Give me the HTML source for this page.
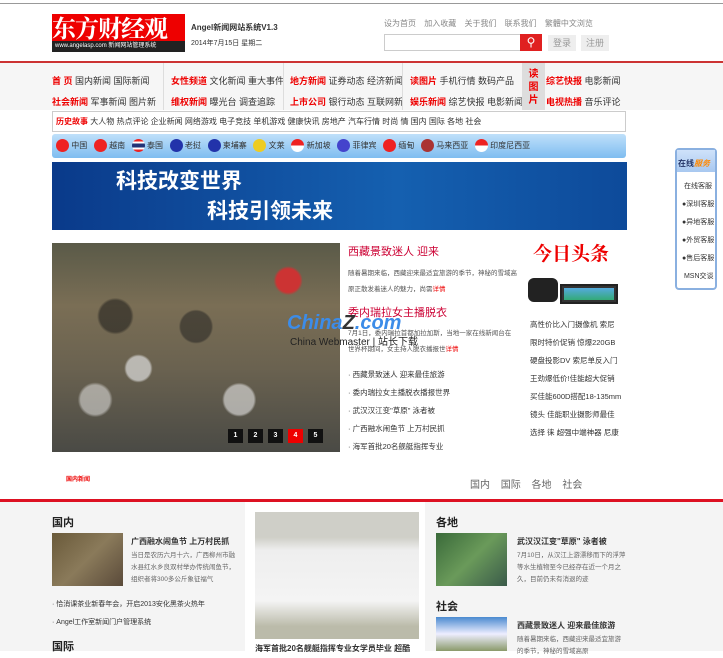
<!DOCTYPE html>
<html><head><meta charset="utf-8"><style>
*{margin:0;padding:0;box-sizing:border-box}
body{width:723px;height:651px;overflow:hidden;background:#fff;font-family:"Liberation Sans","Noto Sans CJK SC",sans-serif;font-size:9px;color:#333;position:relative}
.a{position:absolute}
.r{color:#e00;font-weight:bold}
</style></head><body>
<div class="a" style="left:0;top:3px;width:723px;height:1px;background:#999"></div>
<div class="a" style="left:52px;top:14px;width:133px;height:38px;background:#e00"></div>
<div class="a" style="left:52px;top:12px;width:133px;font:bold 24px/30px 'Noto Serif CJK SC',serif;color:#fff;letter-spacing:-1px">东方财经观察</div>
<div class="a" style="left:52px;top:41px;width:133px;height:11px;background:#222;color:#fff;font-size:6px;line-height:11px;padding-left:3px">www.angelasp.com 新闻网站管理系统</div>
<div class="a" style="left:191px;top:22px;font-size:8px;font-weight:bold">Angel新闻网站系统V1.3</div>
<div class="a" style="left:191px;top:38px;font-size:7px">2014年7月15日 星期二</div>
<div class="a" style="left:384px;top:18px;font-size:8px;color:#888;word-spacing:6px">设为首页 加入收藏 关于我们 联系我们 繁體中文浏览</div>
<div class="a" style="left:384px;top:34px;width:136px;height:17px;border:1px solid #ccc;border-right:none"></div>
<div class="a" style="left:520px;top:34px;width:22px;height:17px;background:#e02020;color:#fff;text-align:center;font-size:12px;line-height:16px">⚲</div>
<div class="a" style="left:548px;top:35px;width:28px;height:16px;background:#eee;color:#999;text-align:center;line-height:16px">登录</div>
<div class="a" style="left:581px;top:35px;width:28px;height:16px;background:#eee;color:#999;text-align:center;line-height:16px">注册</div>
<div class="a" style="left:0;top:61px;width:723px;height:2px;background:#c33"></div>
<div class="a" style="left:0;top:63px;width:723px;height:47px;background:#f6f6f6"></div>
<div class="a" style="left:52px;top:71px;line-height:21px;width:110px"><span class="r">首 页</span> 国内新闻 国际新闻<br><span class="r">社会新闻</span> 军事新闻 图片新闻</div>
<div class="a" style="left:163px;top:63px;width:1px;height:47px;background:#ddd"></div>
<div class="a" style="left:171px;top:71px;line-height:21px"><span class="r">女性频道</span> 文化新闻 重大事件<br><span class="r">维权新闻</span> 曝光台 调查追踪</div>
<div class="a" style="left:283px;top:63px;width:1px;height:47px;background:#ddd"></div>
<div class="a" style="left:290px;top:71px;line-height:21px"><span class="r">地方新闻</span> 证券动态 经济新闻<br><span class="r">上市公司</span> 银行动态 互联网新</div>
<div class="a" style="left:402px;top:63px;width:1px;height:47px;background:#ddd"></div>
<div class="a" style="left:410px;top:71px;line-height:21px"><span class="r">读图片</span> 手机行情 数码产品<br><span class="r">娱乐新闻</span> 综艺快报 电影新闻</div>
<div class="a" style="left:522px;top:63px;width:23px;height:47px;background:#ddd;color:#e00;font-weight:bold;font-size:10px;text-align:center;line-height:13px;padding-top:5px">读<br>图<br>片</div>
<div class="a" style="left:546px;top:71px;line-height:21px"><span class="r">综艺快报</span> 电影新闻<br><span class="r">电视热播</span> 音乐评论</div>
<div class="a" style="left:52px;top:111px;width:574px;height:21px;border:1px solid #ccc;background:#fff;line-height:19px;padding-left:3px;font-size:8px;white-space:nowrap"><span class="r">历史故事</span> 大人物 热点评论 企业新闻 网络游戏 电子竞技 单机游戏 健康快讯 房地产 汽车行情 时尚 情 国内 国际 各地 社会</div>
<div class="a" style="left:52px;top:134px;width:574px;height:24px;border-radius:3px;background:linear-gradient(#bfe0fa,#7fbdf0);font-size:8px;line-height:24px;white-space:nowrap;padding-left:4px">
<span style="display:inline-block;width:13px;height:13px;border-radius:50%;background:#e22;vertical-align:middle"></span> 中国&nbsp;&nbsp; <span style="display:inline-block;width:13px;height:13px;border-radius:50%;background:#e22;vertical-align:middle"></span> 越南&nbsp;&nbsp; <span style="display:inline-block;width:13px;height:13px;border-radius:50%;background:linear-gradient(#e22 20%,#fff 20%,#fff 35%,#237 35%,#237 65%,#fff 65%,#fff 80%,#e22 80%);vertical-align:middle"></span> 泰国&nbsp;&nbsp; <span style="display:inline-block;width:13px;height:13px;border-radius:50%;background:#23a;vertical-align:middle"></span> 老挝&nbsp;&nbsp; <span style="display:inline-block;width:13px;height:13px;border-radius:50%;background:#23a;vertical-align:middle"></span> 柬埔寨&nbsp;&nbsp; <span style="display:inline-block;width:13px;height:13px;border-radius:50%;background:#ec2;vertical-align:middle"></span> 文莱&nbsp;&nbsp; <span style="display:inline-block;width:13px;height:13px;border-radius:50%;background:linear-gradient(#e22 50%,#fff 50%);vertical-align:middle"></span> 新加坡&nbsp;&nbsp; <span style="display:inline-block;width:13px;height:13px;border-radius:50%;background:#44c;vertical-align:middle"></span> 菲律宾&nbsp;&nbsp; <span style="display:inline-block;width:13px;height:13px;border-radius:50%;background:#e22;vertical-align:middle"></span> 缅甸&nbsp;&nbsp; <span style="display:inline-block;width:13px;height:13px;border-radius:50%;background:#a33;vertical-align:middle"></span> 马来西亚&nbsp;&nbsp; <span style="display:inline-block;width:13px;height:13px;border-radius:50%;background:linear-gradient(#e22 50%,#fff 50%);vertical-align:middle"></span> 印度尼西亚</div>
<div class="a" style="left:52px;top:162px;width:575px;height:68px;background:linear-gradient(90deg,#0a3a8a,#1560b0 60%,#0d4a9a)"></div>
<div class="a" style="left:116px;top:168px;color:#fff;font-weight:bold;font-size:21px;line-height:28px">科技改变世界</div>
<div class="a" style="left:207px;top:198px;color:#fff;font-weight:bold;font-size:21px;line-height:28px">科技引领未来</div>
<div class="a" style="left:675px;top:148px;width:42px;height:142px;border:2px solid #8ab0e0;border-radius:4px;background:#fff"></div>
<div class="a" style="left:677px;top:150px;width:38px;height:22px;background:linear-gradient(#cfe2fa,#a8c8f0)"></div>
<div class="a" style="left:678px;top:158px;font-size:8px;font-weight:bold;color:#236"><span>在线</span><span style="color:#f80;font-style:italic">服务</span></div>
<div class="a" style="left:682px;top:178px;font-size:7px;line-height:18px;width:40px">&nbsp;在线客服<br>●深圳客服<br>●异地客服<br>●外贸客服<br>●售后客服<br>&nbsp;MSN交谈</div>
<div class="a" style="left:52px;top:243px;width:288px;height:209px;background:linear-gradient(180deg,#5a5a48,#7a6e55 30%,#6a6250 60%,#4a4a45);"></div>
<div class="a" style="left:52px;top:243px;width:288px;height:209px;background:radial-gradient(circle at 30% 60%,rgba(220,220,220,.7) 0 5%,transparent 6%),radial-gradient(circle at 65% 75%,rgba(230,230,230,.6) 0 6%,transparent 7%),radial-gradient(circle at 82% 18%,#c33 0 4%,transparent 5%),radial-gradient(circle at 15% 75%,rgba(240,240,240,.5) 0 5%,transparent 6%),radial-gradient(circle at 50% 40%,rgba(30,30,30,.5) 0 8%,transparent 9%),radial-gradient(circle at 22% 35%,rgba(20,20,20,.5) 0 6%,transparent 7%)"></div>
<div class="a" style="left:228px;top:429px;font-size:7px;color:#fff;font-weight:bold">
<span style="display:inline-block;width:15px;height:14px;background:#111;text-align:center;line-height:14px;margin-right:5px">1</span><span style="display:inline-block;width:15px;height:14px;background:#111;text-align:center;line-height:14px;margin-right:5px">2</span><span style="display:inline-block;width:15px;height:14px;background:#111;text-align:center;line-height:14px;margin-right:5px">3</span><span style="display:inline-block;width:15px;height:14px;background:#e00;text-align:center;line-height:14px;margin-right:5px">4</span><span style="display:inline-block;width:15px;height:14px;background:#111;text-align:center;line-height:14px">5</span></div>
<div class="a" style="left:348px;top:243px;font-size:11px;color:#c03">西藏景致迷人 迎来</div>
<div class="a" style="left:348px;top:266px;font-size:6.5px;line-height:16px;width:170px;color:#555">随着暑期来临，西藏迎来最适宜旅游的季节，神秘的雪域高原正散发着迷人的魅力，尚需<span style="color:#e00">详情</span></div>
<div class="a" style="left:348px;top:304px;font-size:11px;color:#c03">委内瑞拉女主播脱衣</div>
<div class="a" style="left:287px;top:312px;font:bold italic 20px 'Liberation Sans',sans-serif;color:#3c8ce8">China<span style="color:#333">Z</span>.com</div>
<div class="a" style="left:290px;top:333px;font-size:10px;color:#222">China Webmaster | 站长下载</div>
<div class="a" style="left:348px;top:326px;font-size:6.5px;line-height:16px;width:165px;color:#555">7月1日，委内瑞拉首都加拉加斯，当地一家在线新闻台在世界杯期间，女主持人脱衣播报世<span style="color:#e00">详情</span></div>
<div class="a" style="left:348px;top:366px;font-size:7.5px;line-height:18px">· 西藏景致迷人 迎来最佳旅游<br>· 委内瑞拉女主播脱衣播报世界<br>· 武汉汉江变"草原" 泳者被<br>· 广西融水闹鱼节 上万村民抓<br>· 海军首批20名舰艇指挥专业</div>
<div class="a" style="left:533px;top:239px;font:bold 19px/28px 'Noto Serif CJK SC',serif;color:#e00">今日头条</div>
<div class="a" style="left:528px;top:278px;width:30px;height:24px;background:#222;border-radius:6px"></div>
<div class="a" style="left:560px;top:284px;width:58px;height:20px;background:#333;border:2px solid #222"><div style="margin:2px;height:12px;background:linear-gradient(#5ad,#3a7)"></div></div>
<div class="a" style="left:530px;top:316px;font-size:7.5px;line-height:18px;width:92px">高性价比入门摄像机 索尼限时特价促销 惊爆220GB硬盘投影DV 索尼单反入门王劲爆低价!佳能超大促销 买佳能600D搭配18-135mm镜头 佳能职业摄影师最佳选择 徕 超强中端神器 尼康</div>
<div class="a" style="left:66px;top:474px;font-size:6px;color:#e00;font-weight:bold">国内新闻</div>
<div class="a" style="left:470px;top:476px;font-size:10px;color:#666;word-spacing:8px">国内 国际 各地 社会</div>
<div class="a" style="left:0;top:499px;width:723px;height:3px;background:#d12"></div>
<div class="a" style="left:0;top:502px;width:723px;height:149px;background:#f4f4f4"></div>
<div class="a" style="left:245px;top:502px;width:180px;height:149px;background:#fff"></div>
<div class="a" style="left:52px;top:514px;font-size:11px;font-weight:bold;color:#222">国内</div>
<div class="a" style="left:52px;top:533px;width:71px;height:53px;background:linear-gradient(135deg,#6a5a3a,#8a7a5a,#5a4a3a)"></div>
<div class="a" style="left:131px;top:536px;font-size:8px;font-weight:bold">广西融水闹鱼节 上万村民抓</div>
<div class="a" style="left:131px;top:550px;font-size:6.5px;line-height:12px;width:110px;color:#666">当日是农历六月十六，广西柳州市融水县红水乡良双村举办传统闹鱼节，组织者将300多公斤象征福气</div>
<div class="a" style="left:52px;top:596px;font-size:7px;line-height:18px">· 恰消课茶业新春年会，开启2013安化黑茶火热年<br>· Angel工作室新闻门户管理系统</div>
<div class="a" style="left:52px;top:638px;font-size:11px;font-weight:bold;color:#222">国际</div>
<div class="a" style="left:255px;top:512px;width:164px;height:127px;background:linear-gradient(#cfcfc8 20%,#eee 30%,#f4f4f4 70%,#bba 90%)"></div>
<div class="a" style="left:255px;top:643px;font-size:8px;font-weight:bold">海军首批20名舰艇指挥专业女学员毕业 超酷</div>
<div class="a" style="left:436px;top:514px;font-size:11px;font-weight:bold;color:#222">各地</div>
<div class="a" style="left:436px;top:533px;width:71px;height:53px;background:linear-gradient(135deg,#3a6a3a,#6a9a5a,#3a5a4a)"></div>
<div class="a" style="left:517px;top:536px;font-size:8px;font-weight:bold">武汉汉江变"草原" 泳者被</div>
<div class="a" style="left:517px;top:550px;font-size:6.5px;line-height:12px;width:110px;color:#666">7月10日，从汉江上游漂移而下的浮萍等水生植物至今已经存在近一个月之久，目前仍未有消退的迹</div>
<div class="a" style="left:436px;top:598px;font-size:11px;font-weight:bold;color:#222">社会</div>
<div class="a" style="left:436px;top:617px;width:71px;height:34px;background:linear-gradient(#4a8ad0,#eef 50%,#8a9a6a)"></div>
<div class="a" style="left:517px;top:620px;font-size:8px;font-weight:bold">西藏景致迷人 迎来最佳旅游</div>
<div class="a" style="left:517px;top:634px;font-size:6.5px;line-height:12px;width:110px;color:#666">随着暑期来临，西藏迎来最适宜旅游的季节，神秘的雪域高原</div>
</body></html>
